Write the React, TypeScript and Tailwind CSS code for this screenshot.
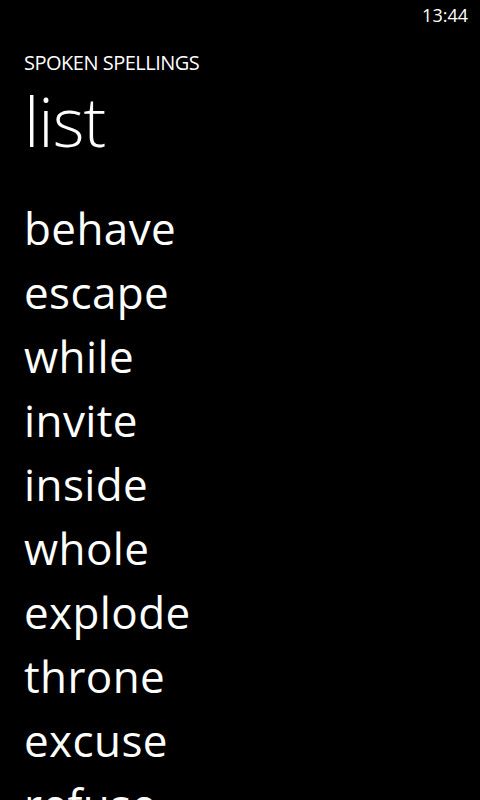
import React from 'react';

const words = ['behave', 'escape', 'while', 'invite', 'inside', 'whole', 'explode', 'throne', 'excuse', 'refuse'];

const font = { fontFamily: '"Open Sans", "Noto Sans", sans-serif' };

const App: React.FC = () => {
  return (
    <div className="w-[480px] h-[800px] bg-black text-white overflow-hidden" style={font}>
      {/* status bar */}
      <div className="h-[30px] flex justify-end pr-[12px] text-[18px] leading-[30px]">13:44</div>

      {/* page header */}
      <div className="pt-[19px] px-6">
        <div className="text-[20px] leading-[28px] tracking-[-0.5px]">SPOKEN SPELLINGS</div>
        <div className="mt-[4px] text-[68px] leading-[80px] font-light tracking-[-1px]">list</div>
      </div>

      {/* word list */}
      <div className="mt-[35px] px-6 flex flex-col">
        {words.map((w) => (
          <div key={w} className="text-[44px] leading-[64px] tracking-[0.4px]">{w}</div>
        ))}
      </div>
    </div>
  );
};

export default App;
